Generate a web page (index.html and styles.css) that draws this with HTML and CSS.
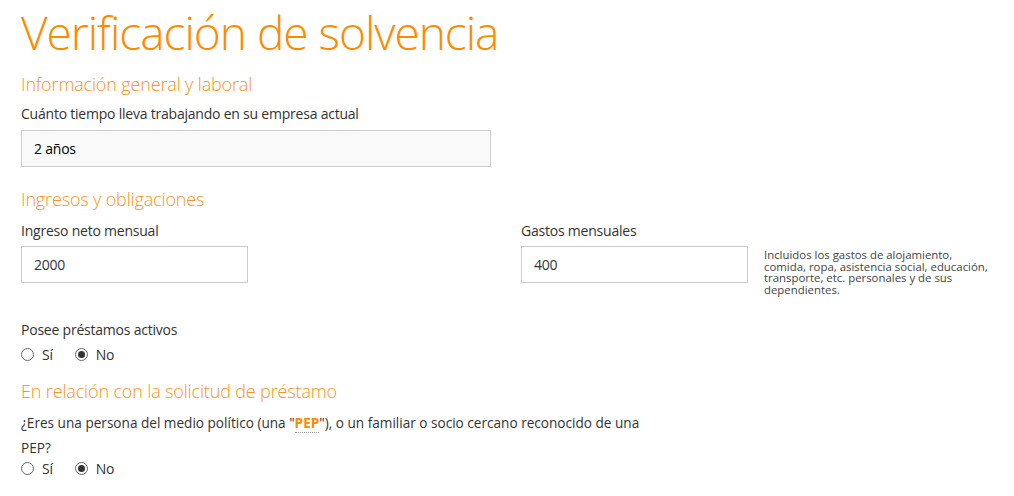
FILE: index.html
```html
<html lang="es">
<head>
  <meta charset="UTF-8" />
  <meta name="viewport" content="width=device-width, initial-scale=1.0"/>
  <title>Verificación de solvencia</title>
  <link rel="stylesheet" href="styles.css">
</head>
<body>
  <div class="page">
    <h1>Verificación de solvencia</h1>

    <h2>Información general y laboral</h2>
    <label class="field-label" for="tiempo">Cuánto tiempo lleva trabajando en su empresa actual</label>
    <input class="input input-wide input-readonly" id="tiempo" type="text" value="2 años" readonly>

    <h2 class="section-gap">Ingresos y obligaciones</h2>
    <div class="two-cols">
      <div class="col">
        <label class="field-label" for="ingreso">Ingreso neto mensual</label>
        <input class="input input-short" id="ingreso" type="text" value="2000">
      </div>
      <div class="col">
        <label class="field-label" for="gastos">Gastos mensuales</label>
        <div class="with-help">
          <input class="input input-short" id="gastos" type="text" value="400">
          <div class="help">Incluidos los gastos de alojamiento, comida, ropa, asistencia social, educación, transporte, etc. personales y de sus dependientes.</div>
        </div>
      </div>
    </div>

    <div class="question">
      <div class="field-label">Posee préstamos activos</div>
      <div class="radios">
        <label class="radio"><input type="radio" name="prestamos"> Sí</label>
        <label class="radio"><input type="radio" name="prestamos" checked> No</label>
      </div>
    </div>

    <h2 class="section-gap-small">En relación con la solicitud de préstamo</h2>
    <p class="long-question">¿Eres una persona del medio político (una "<span class="pep">PEP</span>"), o un familiar o socio cercano reconocido de una PEP?</p>
    <div class="radios radios-tight">
      <label class="radio"><input type="radio" name="pep"> Sí</label>
      <label class="radio"><input type="radio" name="pep" checked> No</label>
    </div>
  </div>
</body>
</html>
```

FILE: styles.css
```css
* { box-sizing: border-box; }

body {
  margin: 0;
  padding: 0;
  background: #fff;
  font-family: 'Open Sans', 'Noto Sans', sans-serif;
  color: #333;
  letter-spacing: -0.22px;
  overflow: hidden;
}

.page {
  padding: 0 21px;
  width: 1014px;
}

h1 {
  margin: 4px 0 0;
  font-size: 46px;
  line-height: 56px;
  font-weight: 300;
  letter-spacing: -1px;
  color: #ff8a00;
}

h2 {
  margin: 12px 0 0;
  font-size: 18px;
  line-height: 24px;
  font-weight: 300;
  letter-spacing: -0.15px;
  color: #f7941d;
}

.section-gap { margin-top: 20px; }
.section-gap-small { margin-top: 14px; }

.field-label {
  display: block;
  margin-top: 8px;
  font-size: 14px;
  line-height: 20px;
  color: #333;
}

.input {
  display: block;
  height: 37px;
  margin-top: 6px;
  padding: 0 12px;
  border: 1px solid #ccc;
  border-radius: 0;
  background: #fff;
  font-family: inherit;
  font-size: 14px;
  letter-spacing: -0.22px;
  color: #333;
  outline: none;
}

.input-wide { width: 470px; }
.input-short { width: 227px; }

.input-readonly {
  background: #f9f9f9;
  color: #000;
}

.two-cols {
  display: grid;
  grid-template-columns: 500px 1fr;
}

.two-cols .field-label { margin-top: 10px; }
.two-cols .input { margin-top: 5px; }

.with-help {
  display: flex;
  align-items: flex-start;
  gap: 16px;
}

.with-help .input { flex: none; }

.help {
  width: 228px;
  margin-top: 8px;
  font-size: 11.4px;
  line-height: 11.7px;
  letter-spacing: 0;
  color: #444;
}

.question { margin-top: 24px; }

.radios {
  display: flex;
  gap: 22px;
  margin-top: 5px;
  font-size: 14px;
  line-height: 20px;
}

.radio {
  display: flex;
  align-items: center;
  gap: 8px;
}

.radio input {
  appearance: none;
  width: 13px;
  height: 13px;
  margin: 0;
  border: 1px solid #666;
  border-radius: 50%;
  background: #fff;
  display: grid;
  place-items: center;
}

.radio input:checked::after {
  content: '';
  width: 7px;
  height: 7px;
  border-radius: 50%;
  background: #333;
}

.long-question {
  margin: 7px 0 0;
  max-width: 640px;
  font-size: 13.6px;
  line-height: 25px;
  letter-spacing: 0;
}

.pep {
  border-bottom: 1px dotted #999;
  font-weight: bold;
  color: #ff8a00;
}

.radios-tight { margin-top: 0; line-height: 18px; }
```
